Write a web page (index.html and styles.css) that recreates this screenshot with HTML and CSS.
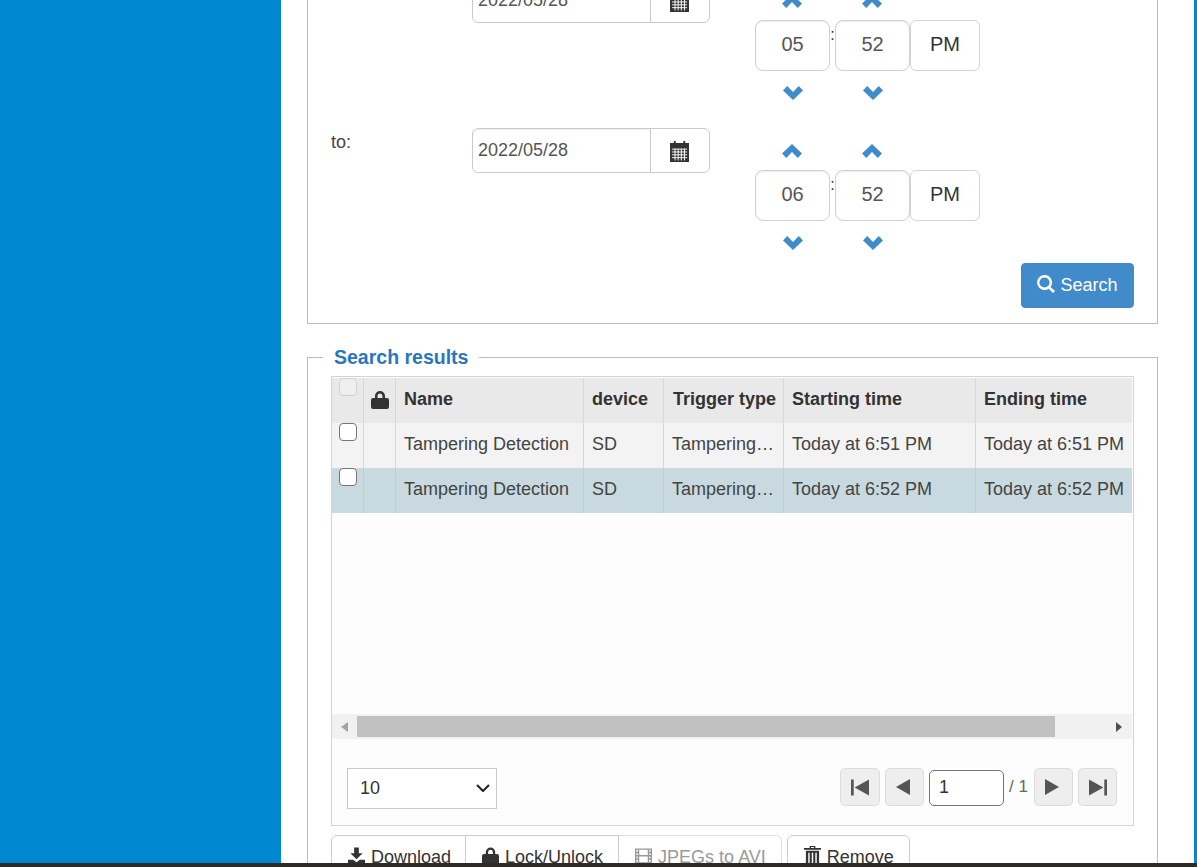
FILE: index.html
```html
<!DOCTYPE html>
<html lang="en">
<head>
<meta charset="utf-8">
<title>Search results</title>
<link rel="stylesheet" href="styles.css">
</head>
<body>
<svg class="defs" width="0" height="0" aria-hidden="true">
  <defs>
    <symbol id="i-up" viewBox="0 0 20 14"><path d="M10 0L20 9.600L15.800 14L10 8L4.200 14L0 9.600Z"/></symbol>
    <symbol id="i-down" viewBox="0 0 20 14"><path d="M10 14L20 4.400L15.800 0L10 6L4.200 0L0 4.400Z"/></symbol>
    <symbol id="i-cal" viewBox="0 0 20 22"><path d="M4 0H6V2H14V0H16V2H20V22H0V2H4Z"/><path class="cut" d="M2 8.500H18M2 11.500H18M2 14.500H18M2 17.500H18M5.300 8V20.500M8.600 8V20.500M11.900 8V20.500M15.200 8V20.500"/></symbol>
    <symbol id="i-lock" viewBox="0 0 18 18"><path d="M4 7V5A5 5 0 0 1 14 5V7H16A2 2 0 0 1 18 9V16A2 2 0 0 1 16 18H2A2 2 0 0 1 0 16V9A2 2 0 0 1 2 7ZM6.500 7H11.500V5A2.500 2.500 0 0 0 6.500 5Z"/></symbol>
    <symbol id="i-search" viewBox="0 0 18 18"><path d="M7.500 0A7.500 7.500 0 0 1 13.500 12L18 16L16 18L11.700 13.800A7.500 7.500 0 1 1 7.500 0ZM7.500 2.400A5.100 5.100 0 1 0 7.500 12.600A5.100 5.100 0 1 0 7.500 2.400Z"/></symbol>
    <symbol id="i-dl" viewBox="0 0 18 18"><path d="M6.500 0H11.500V6H15.500L9 12.500L2.500 6H6.500Z"/><path d="M0 13H5.500L9 15.500L12.500 13H18V18H0Z"/></symbol>
    <symbol id="i-film" viewBox="0 0 18 18"><path fill-rule="evenodd" d="M0 1H18V17H0ZM1.500 2.500V4.500H3V2.500ZM1.500 6V8H3V6ZM1.500 9.500V11.500H3V9.500ZM1.500 13V15.500H3V13ZM15 2.500V4.500H16.500V2.500ZM15 6V8H16.500V6ZM15 9.500V11.500H16.500V9.500ZM15 13V15.500H16.500V13ZM4.500 2.500V8H13.500V2.500ZM4.500 9.500V15.500H13.500V9.500Z"/></symbol>
    <symbol id="i-trash" viewBox="0 0 18 20"><path d="M6 0H12V2H18V4H0V2H6ZM7.500 1V2H10.500V1Z"/><path d="M2 5H16V20H2ZM4.500 7V18H6V7ZM8.250 7V18H9.750V7ZM12 7V18H13.500V7Z" fill-rule="evenodd"/></symbol>
    <symbol id="i-first" viewBox="0 0 20 18"><path d="M0 0H3V18H0ZM20 0V18L4 9Z"/></symbol>
    <symbol id="i-prev" viewBox="0 0 14 16"><path d="M14 0V16L0 8Z"/></symbol>
    <symbol id="i-next" viewBox="0 0 14 16"><path d="M0 0V16L14 8Z"/></symbol>
    <symbol id="i-last" viewBox="0 0 20 18"><path d="M17 0H20V18H17ZM0 0V18L16 9Z"/></symbol>
    <symbol id="i-caret" viewBox="0 0 14 8"><path d="M1 1L7 7L13 1" fill="none" stroke="currentColor" stroke-width="2"/></symbol>
  </defs>
</svg>

<div class="screen">
  <div class="shell">
    <aside class="sidebar"></aside>
    <main class="main">
      <section class="panel">
        <form class="range">
          <label class="range-label">from:</label>
          <div class="date-group">
            <input class="date-input" type="text" value="2022/05/28">
            <span class="date-addon"><svg class="ico-cal"><use href="#i-cal"/></svg></span>
          </div>
          <div class="picker">
            <span class="arrow arrow-up"><svg class="ico-chev"><use href="#i-up"/></svg></span>
            <span class="picker-gap"></span>
            <span class="arrow arrow-up"><svg class="ico-chev"><use href="#i-up"/></svg></span>
            <span></span>
            <input class="time-input" type="text" value="05">
            <span class="colon">:</span>
            <input class="time-input" type="text" value="52">
            <span class="meridian">PM</span>
            <span class="arrow arrow-down"><svg class="ico-chev"><use href="#i-down"/></svg></span>
            <span class="picker-gap"></span>
            <span class="arrow arrow-down"><svg class="ico-chev"><use href="#i-down"/></svg></span>
            <span></span>
          </div>

          <label class="range-label">to:</label>
          <div class="date-group">
            <input class="date-input" type="text" value="2022/05/28">
            <span class="date-addon"><svg class="ico-cal"><use href="#i-cal"/></svg></span>
          </div>
          <div class="picker">
            <span class="arrow arrow-up"><svg class="ico-chev"><use href="#i-up"/></svg></span>
            <span class="picker-gap"></span>
            <span class="arrow arrow-up"><svg class="ico-chev"><use href="#i-up"/></svg></span>
            <span></span>
            <input class="time-input" type="text" value="06">
            <span class="colon">:</span>
            <input class="time-input" type="text" value="52">
            <span class="meridian">PM</span>
            <span class="arrow arrow-down"><svg class="ico-chev"><use href="#i-down"/></svg></span>
            <span class="picker-gap"></span>
            <span class="arrow arrow-down"><svg class="ico-chev"><use href="#i-down"/></svg></span>
            <span></span>
          </div>
        </form>
        <div class="search-row">
          <button class="search-btn" type="button"><svg class="ico-search"><use href="#i-search"/></svg>Search</button>
        </div>
      </section>

      <fieldset class="results">
        <legend class="results-title">Search results</legend>
        <div class="grid">
          <div class="viewport">
            <table class="table">
              <colgroup>
                <col class="c-check"><col class="c-lock"><col class="c-name"><col class="c-device"><col class="c-trigger"><col class="c-start"><col class="c-end">
              </colgroup>
              <thead>
                <tr>
                  <th class="cell-check"><input class="check check-off" type="checkbox" disabled></th>
                  <th class="cell-lock"><svg class="ico-lock"><use href="#i-lock"/></svg></th>
                  <th>Name</th>
                  <th>device</th>
                  <th class="th-trigger">Trigger type</th>
                  <th>Starting time</th>
                  <th>Ending time</th>
                </tr>
              </thead>
              <tbody>
                <tr class="row-odd">
                  <td class="cell-check"><input class="check" type="checkbox"></td>
                  <td></td>
                  <td>Tampering Detection</td>
                  <td>SD</td>
                  <td>Tampering Detection</td>
                  <td>Today at 6:51 PM</td>
                  <td>Today at 6:51 PM</td>
                </tr>
                <tr class="row-selected">
                  <td class="cell-check"><input class="check" type="checkbox"></td>
                  <td></td>
                  <td>Tampering Detection</td>
                  <td>SD</td>
                  <td>Tampering Detection</td>
                  <td>Today at 6:52 PM</td>
                  <td>Today at 6:52 PM</td>
                </tr>
              </tbody>
            </table>
          </div>
          <div class="scrollbar">
            <span class="scroll-arrow scroll-left"></span>
            <span class="scroll-thumb"></span>
            <span class="scroll-arrow scroll-right"></span>
          </div>
          <div class="grid-footer">
            <div class="select-wrap">
              <select class="page-size">
                <option>10</option>
                <option>20</option>
                <option>50</option>
              </select>
              <svg class="ico-caret"><use href="#i-caret"/></svg>
            </div>
            <div class="pager">
              <button class="page-btn page-wide" type="button"><svg class="ico-step"><use href="#i-first"/></svg></button>
              <button class="page-btn" type="button"><svg class="ico-tri"><use href="#i-prev"/></svg></button>
              <input class="page-input" type="text" value="1">
              <span class="page-total">/ 1</span>
              <button class="page-btn" type="button"><svg class="ico-tri"><use href="#i-next"/></svg></button>
              <button class="page-btn" type="button"><svg class="ico-step"><use href="#i-last"/></svg></button>
            </div>
          </div>
        </div>
        <div class="actions">
          <div class="btn-group">
            <button class="act-btn" type="button"><svg class="ico-act"><use href="#i-dl"/></svg>Download</button>
            <button class="act-btn" type="button"><svg class="ico-act"><use href="#i-lock"/></svg>Lock/Unlock</button>
            <button class="act-btn act-disabled" type="button"><svg class="ico-act"><use href="#i-film"/></svg>JPEGs to AVI</button>
          </div>
          <button class="act-btn act-single" type="button"><svg class="ico-act ico-tall"><use href="#i-trash"/></svg>Remove</button>
        </div>
      </fieldset>
    </main>
    <aside class="edge"></aside>
  </div>
  <div class="statusbar"></div>
</div>
</body>
</html>
```
FILE: styles.css
```css
* { box-sizing: border-box; }
html, body { margin: 0; padding: 0; height: 100%; overflow: hidden; }
body { font-family: "Liberation Sans", Arial, sans-serif; font-size: 18px; color: #333; background: #fff; }
.defs { position: absolute; }
input, button, select { font-family: inherit; font-size: 18px; }

.screen { display: flex; flex-direction: column; height: 867px; }
.shell { flex: 1; min-height: 0; display: flex; overflow: hidden; }
.statusbar { height: 4px; background: #2e2b28; }
.sidebar { width: 281px; flex: none; background: #0087d1; }
.edge { width: 3px; flex: none; background: #0087d1; }
.main { flex: 1; min-width: 0; padding: 0 36px 0 26px; background: #fff; }

.panel { margin-top: -40px; padding: 17px 0 15px 23px; border: 1px solid #bdbdb8; }
.range { display: grid; grid-template-columns: 141px 238px auto; row-gap: 15px; justify-content: start; }
.range-label { line-height: 28px; color: #444; }
.date-group { display: flex; height: 45px; border: 1px solid #c6cad2; border-radius: 6px; background: #fff; }
.date-input { width: 178px; border: 0; border-right: 1px solid #c6cad2; border-radius: 6px 0 0 6px; padding: 0 5px; color: #555; background: #fff; outline: none; box-shadow: inset 0 1px 1px rgba(0,0,0,.07); }
.date-addon { flex: 1; display: flex; align-items: center; justify-content: center; padding: 2px 2px 0 0; }
.ico-cal { width: 19px; height: 21px; fill: #333; }
.cut { stroke: #fff; stroke-width: 1; fill: none; }

.picker { margin-left: 45px; display: grid; grid-template-columns: 75px 5px 75px 70px; grid-template-rows: 42px 51px 42px; }
.arrow { display: flex; align-items: center; justify-content: center; }
.arrow-up { padding-right: 2px; }
.arrow-up .ico-chev { margin-top: 4px; }
.arrow-down { padding-left: 1px; }
.arrow-down .ico-chev { margin-top: 2px; }
.ico-chev { width: 20px; height: 14px; fill: #428bca; }
.time-input { width: 75px; height: 51px; border: 1px solid #cfd0d6; border-radius: 8px; text-align: center; font-size: 20px; color: #555; background: #fff; padding: 0 0 2px; outline: none; box-shadow: inset 0 1px 1px rgba(0,0,0,.07); }
.colon { font-size: 16px; line-height: 16px; text-align: center; padding-top: 7px; color: #333; }
.meridian { display: flex; align-items: center; justify-content: center; font-size: 20px; color: #333; border: 1px solid #d4d4d4; border-radius: 6px; padding-bottom: 2px; }

.search-row { display: flex; justify-content: flex-end; padding-right: 23px; }
.search-btn { display: flex; align-items: center; justify-content: center; gap: 5px; width: 113px; height: 45px; border: 1px solid #428bca; border-radius: 4px; color: #fff; background: #428bca; padding: 0; }
.ico-search { width: 18px; height: 18px; fill: #fff; margin-top: -3px; }

.results { margin: 22px 0 0; padding: 8px 23px 0; border: 1px solid #bdbdb8; min-width: 0; }
.results-title { margin-left: -8px; padding: 0 11px; font-size: 19.5px; line-height: 22px; font-weight: bold; color: #2a76bd; }

.grid { border: 1px solid #d4d4d4; padding-top: 1px; background: #fdfdfd; }
.viewport { height: 336px; overflow: hidden; margin-right: 1px; }
.table { width: 862px; table-layout: fixed; border-collapse: separate; border-spacing: 0; }
.c-check { width: 32px; }
.c-lock { width: 32px; }
.c-name { width: 188px; }
.c-device { width: 80px; }
.c-trigger { width: 120px; }
.c-start { width: 192px; }
.c-end { width: 218px; }
.table th, .table td { height: 45px; padding: 0 8px 2px; text-align: left; white-space: nowrap; overflow: hidden; text-overflow: ellipsis; border-right: 1px solid #d8d8d8; }
.table th { background: #e9e9e9; font-weight: bold; color: #333; }
.table td { color: #444; }
.table .th-trigger { padding: 0 0 2px 9px; }
.row-odd td { background: #f3f3f3; }
.row-selected td { background: #c8dadf; border-right-color: #bfd0d5; }
.table .cell-check { padding: 0 0 0 7px; vertical-align: top; }
.table .cell-lock { padding: 0 0 2px; }
.ico-lock { width: 18px; height: 18px; fill: #333; display: block; margin: 0 auto; }
.check { appearance: none; display: block; width: 18px; height: 18px; margin: 0; border: 1.5px solid #767676; border-radius: 4px; background: #fff; }
.check-off { border-color: #d0d0d0; background: #efefef; }

.scrollbar { display: flex; align-items: center; height: 25px; background: #f1f1f1; margin-right: 1px; }
.scroll-arrow { width: 0; height: 0; border-style: solid; border-color: transparent; flex: none; }
.scroll-left { border-width: 5.500px 7px 5.500px 0; border-right-color: #a3a3a3; margin: 0 9px 0 9px; }
.scroll-right { border-width: 5.500px 0 5.500px 6px; border-left-color: #505050; margin: 0 10px 0 auto; }
.scroll-thumb { width: 698px; height: 21px; background: #c1c1c1; flex: none; }

.grid-footer { display: flex; justify-content: space-between; align-items: flex-start; padding: 29px 16px 16px 15px; }
.select-wrap { position: relative; width: 150px; height: 41px; color: #333; }
.page-size { appearance: none; width: 100%; height: 100%; padding: 0 12px 2px; border: 1px solid #c6cad2; border-radius: 0; background: #fff; color: #333; }
.ico-caret { position: absolute; right: 7px; top: 16px; width: 14px; height: 8px; color: #222; pointer-events: none; }
.pager { display: flex; align-items: flex-start; height: 38px; }
.page-btn { display: flex; align-items: center; justify-content: center; width: 39px; height: 38px; margin-left: 5px; padding: 0; border: 1px solid #dcdcdc; border-radius: 5px; background: #eee; }
.page-wide { width: 40px; margin-left: 0; }
.ico-step { width: 18px; height: 17px; fill: #555; }
.ico-tri { width: 14px; height: 16px; fill: #555; margin-right: 3px; }
.page-input { width: 75px; height: 36px; margin: 2px 0 0 5px; padding: 0 9px 2px; border: 1px solid #767676; border-radius: 5px; background: #fff; color: #333; outline: none; }
.page-total { width: 25px; margin: 0 0 0 5px; color: #666; font-size: 17px; line-height: 38px; white-space: nowrap; }
.page-total + .page-btn { margin-left: 0; }

.actions { display: flex; gap: 5px; margin-top: 9px; padding-bottom: 20px; }
.btn-group { display: flex; }
.act-btn { display: flex; align-items: center; gap: 6px; height: 45px; padding: 0 15px 0 16px; border: 1px solid #ccc; border-left-width: 0; background: #fff; color: #333; white-space: nowrap; }
.btn-group .act-btn:first-child { border-left-width: 1px; border-radius: 6px 0 0 6px; padding-right: 14px; }
.btn-group .act-btn:last-child { border-radius: 0 6px 6px 0; }
.act-single { border-left-width: 1px; border-radius: 6px; }
.act-disabled { color: #999; border-color: #e0e0e0; }
.act-disabled .ico-act { fill: #999; }
.ico-act { width: 17px; height: 18px; fill: #333; flex: none; margin-top: -4px; }
.ico-tall { height: 21px; margin-top: -5px; }
```
